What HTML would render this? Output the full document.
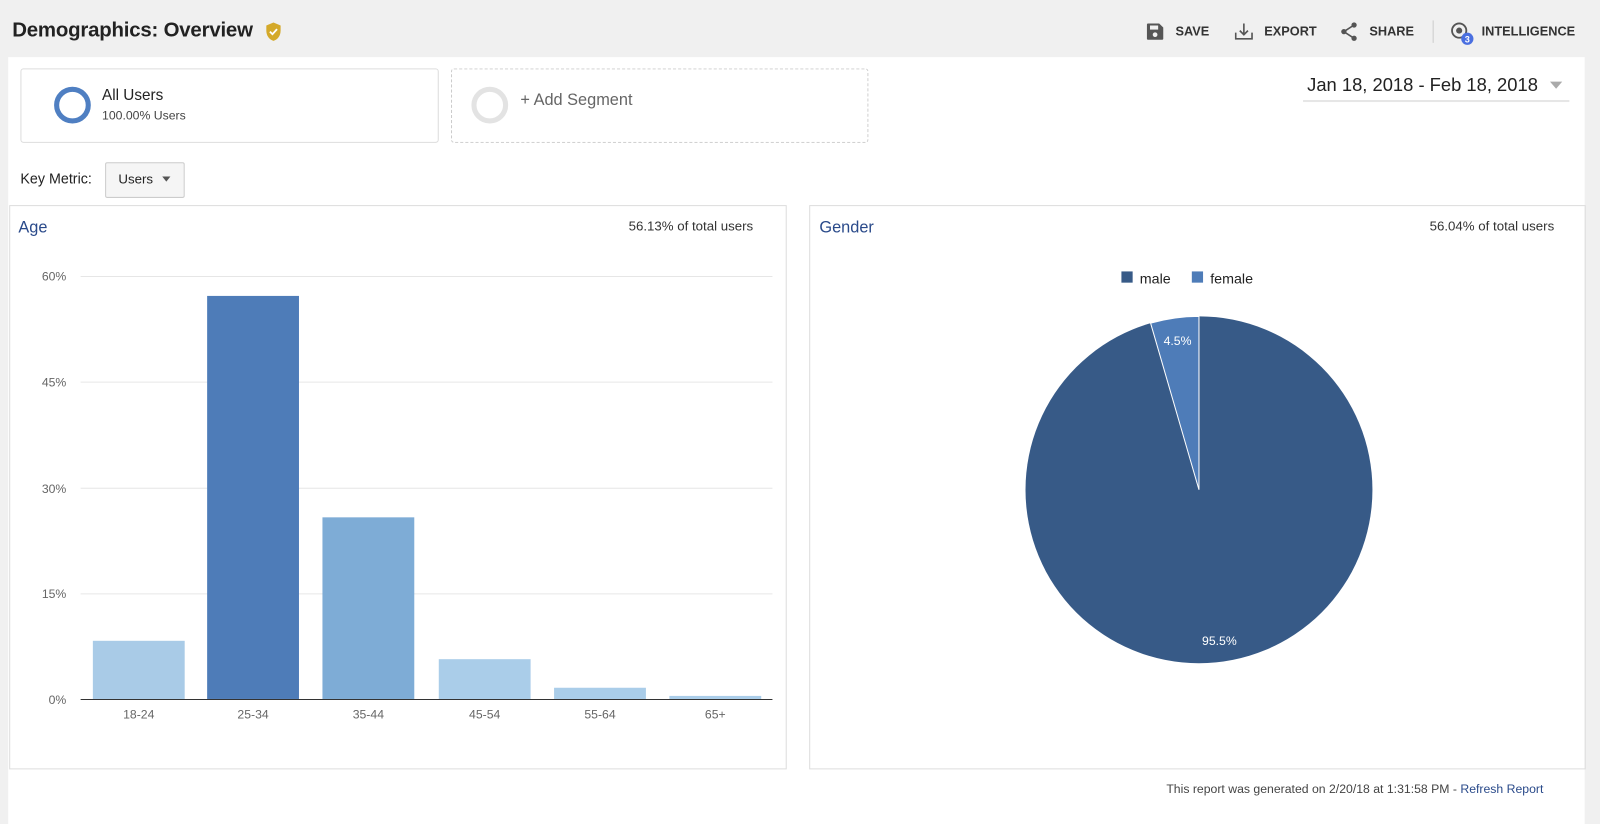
<!DOCTYPE html>
<html><head><meta charset="utf-8"><style>
body{margin:0;width:1600px;height:808px;background:#f0f0f0;font-family:"Liberation Sans",sans-serif;overflow:hidden;color:#222}
#w{position:absolute;left:0;top:0;width:1568px;height:792px;transform:scale(1.0204);transform-origin:0 0}
.a{position:absolute}
.tb{font-size:12.5px;font-weight:bold;color:#333;top:24px}
</style></head><body><div id="w">
<div class="a" style="left:12px;top:19px;font-size:20px;font-weight:bold;color:#222;letter-spacing:-0.2px">Demographics: Overview</div>
<svg class="a" style="left:259px;top:21px" width="18" height="20" viewBox="0 0 18 20"><path d="M9 1L2 4v5c0 5 3 9 7 10 4-1 7-5 7-10V4z" fill="#d4a92a"/><path d="M5.5 10l2.5 2.5 4.5-5" stroke="#fff" stroke-width="1.8" fill="none"/></svg>
<svg class="a" style="left:1123px;top:22px" width="18" height="18" viewBox="0 0 18 18"><path d="M2 1h11l4 4v11a1 1 0 0 1-1 1H2a1 1 0 0 1-1-1V2a1 1 0 0 1 1-1z" fill="#555"/><rect x="4" y="3" width="8" height="4" fill="#f0f0f0"/><circle cx="9" cy="12" r="2.3" fill="#f0f0f0"/></svg>
<div class="a tb" style="left:1152px">SAVE</div>
<svg class="a" style="left:1210px;top:21px" width="18" height="19" viewBox="0 0 18 19"><path d="M1 11v6h16v-6M9 2v11M5 9l4 4 4-4" stroke="#555" stroke-width="1.6" fill="none"/></svg>
<div class="a tb" style="left:1239px">EXPORT</div>
<svg class="a" style="left:1313px;top:21px" width="18" height="20" viewBox="0 0 18 20"><circle cx="14" cy="3.5" r="2.6" fill="#555"/><circle cx="4" cy="10" r="2.6" fill="#555"/><circle cx="14" cy="16.5" r="2.6" fill="#555"/><path d="M14 3.5L4 10l10 6.5" stroke="#555" stroke-width="1.6" fill="none"/></svg>
<div class="a tb" style="left:1342px">SHARE</div>
<div class="a" style="left:1404px;top:20px;width:1px;height:22px;background:#ccc"></div>
<svg class="a" style="left:1420px;top:20px" width="28" height="28" viewBox="0 0 28 28"><circle cx="10" cy="10" r="7" stroke="#555" stroke-width="1.8" fill="none"/><circle cx="10" cy="10" r="3" fill="#555"/><circle cx="18" cy="18" r="6" fill="#4a6fe0"/><text x="18" y="21.5" font-size="9" fill="#fff" text-anchor="middle" font-weight="bold" font-family="Liberation Sans">3</text></svg>
<div class="a tb" style="left:1452px">INTELLIGENCE</div>

<div class="a" style="left:8px;top:56px;width:1545px;height:752px;background:#fff"></div>
<div class="a" style="left:20px;top:67px;width:408px;height:71px;border:1px solid #ddd;border-radius:3px"></div>
<div class="a" style="left:53px;top:85px;width:26px;height:26px;border:5px solid #4f7fc2;border-radius:50%"></div>
<div class="a" style="left:100px;top:85px;font-size:15px">All Users</div>
<div class="a" style="left:100px;top:106px;font-size:12px;color:#444">100.00% Users</div>
<div class="a" style="left:442px;top:67px;width:407px;height:71px;border:1px dashed #ccc;border-radius:3px"></div>
<div class="a" style="left:462px;top:85px;width:26px;height:26px;border:5px solid #e3e3e3;border-radius:50%"></div>
<div class="a" style="left:510px;top:90px;font-size:16px;color:#666">+ Add Segment</div>
<div class="a" style="left:1281px;top:73px;font-size:18px;color:#222">Jan 18, 2018 - Feb 18, 2018</div>
<div class="a" style="left:1519px;top:80px;border:6px solid transparent;border-top:7px solid #aaa"></div>
<div class="a" style="left:1277px;top:98px;width:261px;height:2px;background:#e6e6e6"></div>
<div class="a" style="left:20px;top:167px;font-size:14px">Key Metric:</div>
<div class="a" style="left:103px;top:159px;width:76px;height:33px;border:1px solid #ccc;border-radius:2px;background:#f5f5f5"></div>
<div class="a" style="left:116px;top:168px;font-size:13px">Users</div>
<div class="a" style="left:159px;top:173px;border:4px solid transparent;border-top:5px solid #555"></div>

<div class="a" style="left:9px;top:201px;width:760px;height:551px;border:1px solid #ddd"></div>
<div class="a" style="left:793px;top:201px;width:759px;height:551px;border:1px solid #ddd"></div>
<div class="a" style="left:18px;top:215px;font-size:16px;color:#2a4a8a">Age</div>
<div class="a" style="left:616px;top:214px;font-size:13px;color:#333">56.13% of total users</div>
<div class="a" style="left:803px;top:215px;font-size:16px;color:#2a4a8a">Gender</div>
<div class="a" style="left:1401px;top:214px;font-size:13px;color:#333">56.04% of total users</div>

<svg class="a" style="left:0;top:0" width="1568" height="792" font-family="Liberation Sans">
<g stroke="#e6e6e6" stroke-width="1"><line x1="79" x2="757" y1="271" y2="271"/><line x1="79" x2="757" y1="374.5" y2="374.5"/><line x1="79" x2="757" y1="478.5" y2="478.5"/><line x1="79" x2="757" y1="582" y2="582"/></g>
<g font-size="12" fill="#666" text-anchor="end"><text x="65" y="275">60%</text><text x="65" y="379">45%</text><text x="65" y="483">30%</text><text x="65" y="586">15%</text><text x="65" y="690">0%</text></g>
<rect x="91" y="628" width="90" height="57" fill="#a9cbe7"/>
<rect x="203" y="290" width="90" height="395" fill="#4e7cb8"/>
<rect x="316" y="507" width="90" height="178" fill="#7eacd6"/>
<rect x="430" y="646" width="90" height="39" fill="#aacde9"/>
<rect x="543" y="674" width="90" height="11" fill="#aacde9"/>
<rect x="656" y="682" width="90" height="3" fill="#aacde9"/>
<line x1="79" x2="757" y1="685.5" y2="685.5" stroke="#333"/>
<g font-size="12" fill="#666" text-anchor="middle"><text x="136" y="704">18-24</text><text x="248" y="704">25-34</text><text x="361" y="704">35-44</text><text x="475" y="704">45-54</text><text x="588" y="704">55-64</text><text x="701" y="704">65+</text></g>
<rect x="1099" y="266" width="11" height="11" fill="#375a87"/><text x="1117" y="278" font-size="14" fill="#222">male</text>
<rect x="1168" y="266" width="11" height="11" fill="#4e7cb8"/><text x="1186" y="278" font-size="14" fill="#222">female</text>
<circle cx="1175" cy="480" r="170" fill="#375a87"/>
<path d="M1175 480L1175 310A170 170 0 0 0 1127.6 316.7Z" fill="#4e7cb8" stroke="#fff" stroke-width="1"/>
<text x="1154" y="338" font-size="12" fill="#fff" text-anchor="middle">4.5%</text>
<text x="1195" y="632" font-size="12" fill="#fff" text-anchor="middle">95.5%</text>
</svg>
<div class="a" style="left:1143px;top:766px;font-size:12px;color:#444">This report was generated on 2/20/18 at 1:31:58 PM - <span style="color:#2a4a8a">Refresh Report</span></div>
</div></body></html>
